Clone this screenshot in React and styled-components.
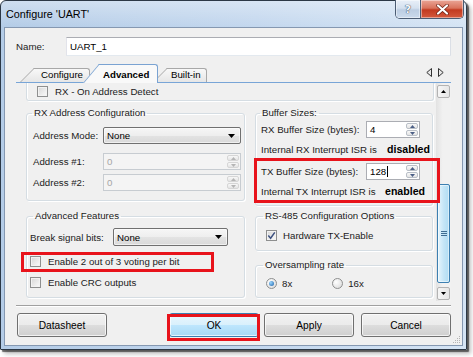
import React from "react";
import styled, { createGlobalStyle } from "styled-components";

const GlobalStyle = createGlobalStyle`
  html, body {
    margin: 0;
    padding: 0;
    background: #ffffff;
  }
  body {
    font-family: "Liberation Sans", Arial, sans-serif;
    font-size: 9.7px;
    color: #1b1b1b;
  }
  *, *::before, *::after {
    box-sizing: border-box;
  }
`;

const Page = styled.div`
  width: 473px;
  height: 357px;
  overflow: hidden;
  background: #ffffff;
`;

const Window = styled.div`
  width: 467px;
  height: 350px;
  display: flex;
  flex-direction: column;
  padding: 0 3px 3px;
  border: 1px solid #2c3846;
  border-radius: 6px 6px 1px 1px;
  background:
    linear-gradient(180deg, rgba(255, 255, 255, 0.35), rgba(255, 255, 255, 0) 26px),
    linear-gradient(90deg, #b4cce7 0%, #c3d7ee 55%, #d5e4f4 100%);
  box-shadow: 2px 2px 1px rgba(0, 0, 0, 0.55), 4px 4px 4px rgba(0, 0, 0, 0.25);
`;

const TitleBar = styled.div`
  height: 26px;
  flex-shrink: 0;
  display: flex;
  align-items: flex-start;
`;

const Title = styled.div`
  padding: 7px 0 0 2px;
  font-size: 10.8px;
  color: #000;
`;

const Caption = styled.div`
  margin: -1px -1px 0 auto;
  height: 19px;
  display: flex;
  border: 1px solid #4b5c73;
  border-top: none;
  border-radius: 0 0 5px 5px;
  overflow: hidden;
`;

const CaptionButton = styled.div`
  width: ${(p) => p.$w}px;
  display: flex;
  align-items: center;
  justify-content: center;
  background: ${(p) =>
    p.$close
      ? "linear-gradient(#eaa697 0%, #d9735c 45%, #c23a20 55%, #d4593d 100%)"
      : "linear-gradient(#e8eff8 0%, #d5e1ef 45%, #bccde2 55%, #cbdaec 100%)"};
  box-shadow: inset 0 0 0 1px rgba(255, 255, 255, 0.45);
  & + & {
    border-left: 1px solid #4b5c73;
  }
`;

const HelpGlyph = styled.span`
  font-family: "DejaVu Sans", sans-serif;
  font-size: 11px;
  font-weight: 700;
  color: #f6f9fc;
  text-shadow: 0 0 1px #30405a, 0 0 1px #30405a;
`;

const Client = styled.div`
  flex: 1;
  position: relative;
  display: flex;
  flex-direction: column;
  padding: 9px 11px 0;
  background: #f0f0f0;
  border: 1px solid #8598b1;
  white-space: nowrap;
`;

const NameRow = styled.div`
  display: flex;
  align-items: center;
  height: 19px;
`;

const NameLabel = styled.div`
  width: 50px;
`;

const TextBox = styled.div`
  flex: 1;
  height: 19px;
  display: flex;
  align-items: center;
  padding-left: 3px;
  background: #ffffff;
  border: 1px solid;
  border-color: #abadb3 #dbdfe6 #e3e9ef #e2e3ea;
  color: #000;
`;

const TabStrip = styled.div`
  margin-top: 8px;
  height: 19px;
  flex-shrink: 0;
  display: flex;
  align-items: flex-end;
  padding-left: 4px;
  border-bottom: 1px solid #78a5d7;
`;

const Tab = styled.div`
  position: relative;
  z-index: ${(p) => (p.$active ? 3 : 1)};
  width: ${(p) => p.$w}px;
  height: ${(p) => (p.$active ? 19 : 14)}px;
  margin-left: ${(p) => p.$ml}px;
  margin-bottom: ${(p) => (p.$active ? -1 : 0)}px;
  padding: ${(p) => (p.$active ? "1px" : "0")} 0 ${(p) => (p.$active ? "0" : "1px")} ${(p) => p.$pl}px;
  display: flex;
  align-items: center;
  font-weight: ${(p) => (p.$active ? 700 : 400)};
  color: #000;
  &::before,
  &::after {
    content: "";
    position: absolute;
    z-index: -1;
    top: 0;
    bottom: 0;
    border: 1px solid ${(p) => (p.$active ? "#7aa3d2" : "#a8a8a8")};
    border-bottom: none;
    background: ${(p) => (p.$active ? "#f9f9f9" : "linear-gradient(#f8f8f8, #e6e6e6)")};
  }
  &::before {
    left: 0;
    width: ${(p) => p.$slant + 4}px;
    border-right: none;
    transform-origin: bottom left;
    transform: skewX(-${(p) => p.$angle}deg);
  }
  &::after {
    left: ${(p) => p.$slant}px;
    right: 0;
    border-left: none;
    border-radius: 0 3px 0 0;
  }
`;

const TabArrows = styled.div`
  margin-left: auto;
  align-self: center;
  display: flex;
  gap: 6px;
  padding: 0 7px 2px 0;
`;

const Body = styled.div`
  height: 218px;
  flex-shrink: 0;
  display: flex;
`;

const Viewport = styled.div`
  flex: 1;
  display: flex;
  flex-direction: column;
  padding: 0 2px 0 10px;
`;

const PartialGroup = styled.div`
  height: 18px;
  padding: 3px 10px 0;
  border: 1px solid #d5dde3;
  border-top: none;
  border-radius: 0 0 3px 3px;
  box-shadow: inset 1px 0 0 #fff, 1px 1px 0 #fff;
`;

const Columns = styled.div`
  margin-top: 6px;
  display: grid;
  grid-template-columns: 219px 178px;
  column-gap: 10px;
  align-items: start;
`;

const Column = styled.div`
  display: flex;
  flex-direction: column;
`;

const Field = styled.fieldset`
  margin: ${(p) => p.$mt || 0}px 0 0;
  padding: ${(p) => p.$pad};
  min-inline-size: 0;
  border: 1px solid #d5dde3;
  border-radius: 3px;
  box-shadow: inset 1px 1px 0 #fff, 1px 1px 0 #fff;
`;

const Legend = styled.legend`
  margin-left: ${(p) => p.$ml}px;
  padding: 0 2px;
  line-height: 12px;
  color: #1b1b1b;
`;

const FormRow = styled.div`
  display: grid;
  grid-template-columns: ${(p) => p.$cols};
  align-items: center;
  height: ${(p) => p.$h || 17}px;
  margin-top: ${(p) => p.$mt || 0}px;
`;

const Value = styled.span`
  padding-left: ${(p) => p.$pl}px;
  font-size: 10.6px;
  font-weight: 700;
  color: #000;
`;

const Select = styled.div`
  height: ${(p) => p.$h || 17}px;
  display: flex;
  align-items: center;
  justify-content: space-between;
  padding: 0 5px 0 3px;
  border: 1px solid #707070;
  border-radius: 2px;
  background: linear-gradient(#f6f6f6 0%, #eeeeee 50%, #e3e3e3 51%, #d9d9d9 100%);
  box-shadow: inset 0 0 0 1px rgba(255, 255, 255, 0.6);
  color: #000;
`;

const Spin = styled.div`
  height: ${(p) => p.$h || 17}px;
  display: flex;
  border: 1px solid ${(p) => (p.$disabled ? "#c7ccd1" : "#abadb3")};
  background: ${(p) => (p.$disabled ? "#f4f4f4" : "#ffffff")};
  color: ${(p) => (p.$disabled ? "#a6a6a6" : "#000")};
`;

const SpinValue = styled.div`
  flex: 1;
  display: flex;
  align-items: center;
  padding-left: 3px;
`;

const TextCaret = styled.span`
  width: 1px;
  height: 11px;
  margin-left: 1px;
  background: #000;
`;

const SpinButtons = styled.div`
  width: 14px;
  display: flex;
  flex-direction: column;
  gap: 1px;
  padding: 1px;
`;

const SpinButton = styled.div`
  flex: 1;
  display: flex;
  align-items: center;
  justify-content: center;
  border: 1px solid ${(p) => (p.$disabled ? "#d6d6d6" : "#b9bfc7")};
  border-radius: 2px;
  background: linear-gradient(#f8f8f8, #e4e4e4);
`;

const CheckRow = styled.div`
  display: flex;
  align-items: center;
  gap: ${(p) => p.$gap || 7}px;
  height: ${(p) => p.$h || 11}px;
  margin-top: ${(p) => p.$mt || 0}px;
  color: #1b1b1b;
`;

const Check = styled.span`
  width: 11px;
  height: 11px;
  flex-shrink: 0;
  display: flex;
  align-items: center;
  justify-content: center;
  border: 1px solid #8e8f8f;
  background: linear-gradient(135deg, #d6d6d6, #fbfbfb);
  box-shadow: inset 0 0 0 1px #f2f2f2;
`;

const RadioGroup = styled.div`
  display: flex;
  align-items: center;
  height: 13px;
  margin-left: ${(p) => p.$ml || 0}px;
  gap: 5px;
`;

const Radio = styled.span`
  width: 11px;
  height: 11px;
  flex-shrink: 0;
  display: flex;
  align-items: center;
  justify-content: center;
  border: 1px solid #8e8f8f;
  border-radius: 50%;
  background: radial-gradient(circle at 35% 35%, #ffffff, #d6d6d6);
  &::after {
    content: "";
    display: ${(p) => (p.$on ? "block" : "none")};
    width: 5px;
    height: 5px;
    border-radius: 50%;
    background: radial-gradient(circle at 35% 35%, #9ad6ff, #1a5fa6);
  }
`;

const Marked = styled.div`
  position: relative;
  margin-top: ${(p) => p.$mt || 0}px;
  margin-left: ${(p) => (p.$push ? "auto" : "0")};
  &::after {
    content: "";
    position: absolute;
    z-index: 5;
    inset: ${(p) => p.$inset};
    border: 3px solid #e8131b;
    pointer-events: none;
  }
`;

const ScrollBar = styled.div`
  width: 15px;
  display: flex;
  flex-direction: column;
  padding: 2px 1px 1px;
  background: linear-gradient(90deg, #e2e2e2, #f1f1f1 45%, #f1f1f1);
`;

const ScrollButton = styled.div`
  height: 13px;
  flex-shrink: 0;
  display: flex;
  align-items: center;
  justify-content: center;
  border: 1px solid #b3b3b3;
  border-radius: 2px;
  background: linear-gradient(90deg, #f6f6f6, #e6e6e6);
`;

const Track = styled.div`
  flex: 1;
  display: flex;
  flex-direction: column;
`;

const Thumb = styled.div`
  margin-top: ${(p) => p.$top}px;
  height: ${(p) => p.$h}px;
  display: flex;
  align-items: center;
  justify-content: center;
  border: 1px solid #3c7fb1;
  border-radius: 2px;
  background: linear-gradient(90deg, #e5f5fd, #c6e6f7 50%, #afdcf3);
  box-shadow: inset 0 0 0 1px rgba(255, 255, 255, 0.5);
  &::after {
    content: "";
    width: 6px;
    height: 5px;
    background: repeating-linear-gradient(#3f6d92 0 1px, transparent 1px 2px);
  }
`;

const Separator = styled.div`
  margin-top: 4px;
  height: 2px;
  flex-shrink: 0;
  border-top: 1px solid #a0a0a0;
  border-bottom: 1px solid #ffffff;
`;

const ButtonRow = styled.div`
  margin-top: 6px;
  display: flex;
  align-items: flex-start;
  padding-left: 1px;
`;

const Button = styled.button`
  width: 90px;
  height: 24px;
  margin: 0 0 0 ${(p) => p.$ml || 0}px;
  padding: 0;
  font: inherit;
  font-size: 10.2px;
  color: #000;
  border: 1px solid ${(p) => (p.$default ? "#3c7fb1" : "#707070")};
  border-radius: 3px;
  background: ${(p) =>
    p.$default
      ? "linear-gradient(#eaf6fd 0%, #d9f0fc 50%, #bee6fd 51%, #a7d9f5 100%)"
      : "linear-gradient(#f2f2f2 0%, #ebebeb 50%, #dddddd 51%, #cfcfcf 100%)"};
  box-shadow: inset 0 0 0 1px rgba(255, 255, 255, 0.7);
`;

const Grip = styled.svg`
  position: absolute;
  right: 1px;
  bottom: 1px;
`;

const Tri = ({ dir = "down", color = "#000", w = 7, h = 4 }) => {
  const d =
    dir === "down" ? `M0 0H${w}L${w / 2} ${h}Z` : `M0 ${h}H${w}L${w / 2} 0Z`;
  return (
    <svg width={w} height={h} viewBox={`0 0 ${w} ${h}`}>
      <path d={d} fill={color} />
    </svg>
  );
};

const CloseIcon = () => (
  <svg width="13" height="11" viewBox="0 0 13 11">
    <path d="M2 1.5L11 9.5M11 1.5L2 9.5" stroke="#6e2315" strokeWidth="3.6" strokeLinecap="round" />
    <path d="M2 1.5L11 9.5M11 1.5L2 9.5" stroke="#ffffff" strokeWidth="2.2" strokeLinecap="round" />
  </svg>
);

const CheckMark = () => (
  <svg width="9" height="9" viewBox="0 0 9 9">
    <path d="M1.3 4.6L3.6 7.2L7.8 1.4" stroke="#3d5180" strokeWidth="1.5" fill="none" />
  </svg>
);

const TabArrow = ({ left }) => (
  <svg width="6" height="9" viewBox="0 0 6 9">
    <path
      d={left ? "M5.5 0.5V8.5L0.8 4.5Z" : "M0.5 0.5V8.5L5.2 4.5Z"}
      fill="#e8e8e8"
      stroke="#333"
      strokeWidth="1"
    />
  </svg>
);

const SpinBox = ({ value, disabled, caret }) => (
  <Spin $disabled={disabled}>
    <SpinValue>
      {value}
      {caret && <TextCaret />}
    </SpinValue>
    <SpinButtons>
      <SpinButton $disabled={disabled}>
        <Tri dir="up" w={5} h={3} color={disabled ? "#b5b5b5" : "#4b5f86"} />
      </SpinButton>
      <SpinButton $disabled={disabled}>
        <Tri dir="down" w={5} h={3} color={disabled ? "#b5b5b5" : "#4b5f86"} />
      </SpinButton>
    </SpinButtons>
  </Spin>
);

export default function App() {
  return (
    <>
      <GlobalStyle />
      <Page>
        <Window>
          <TitleBar>
            <Title>Configure 'UART'</Title>
            <Caption>
              <CaptionButton $w={24}>
                <HelpGlyph>?</HelpGlyph>
              </CaptionButton>
              <CaptionButton $w={43} $close>
                <CloseIcon />
              </CaptionButton>
            </Caption>
          </TitleBar>

          <Client>
            <NameRow>
              <NameLabel>Name:</NameLabel>
              <TextBox>UART_1</TextBox>
            </NameRow>

            <TabStrip>
              <Tab $w={70} $ml={0} $pl={21} $slant={14} $angle={45}>
                Configure
              </Tab>
              <Tab $active $w={75} $ml={-7} $pl={20} $slant={16} $angle={40}>
                Advanced
              </Tab>
              <Tab $w={54} $ml={-5} $pl={18} $slant={14} $angle={45}>
                Built-in
              </Tab>
              <TabArrows>
                <TabArrow left />
                <TabArrow />
              </TabArrows>
            </TabStrip>

            <Body>
              <Viewport>
                <PartialGroup>
                  <CheckRow>
                    <Check />
                    RX - On Address Detect
                  </CheckRow>
                </PartialGroup>

                <Columns>
                  <Column>
                    <Field $pad="8px 3px 9px 6px">
                      <Legend $ml={-1}>RX Address Configuration</Legend>
                      <FormRow $cols="70px 138px">
                        <span>Address Mode:</span>
                        <Select>
                          None
                          <Tri />
                        </Select>
                      </FormRow>
                      <FormRow $cols="70px 138px" $mt={9}>
                        <span>Address #1:</span>
                        <SpinBox value="0" disabled />
                      </FormRow>
                      <FormRow $cols="70px 138px" $mt={4}>
                        <span>Address #2:</span>
                        <SpinBox value="0" disabled />
                      </FormRow>
                    </Field>

                    <Field $mt={9} $pad="6px 3px 8px 3px">
                      <Legend $ml={3}>Advanced Features</Legend>
                      <FormRow $cols="83px 115px" $h={18}>
                        <span>Break signal bits:</span>
                        <Select $h={18}>
                          None
                          <Tri />
                        </Select>
                      </FormRow>
                      <Marked $mt={9} $inset="-3px 27px -4px -9px">
                        <CheckRow $h={13} $gap={7}>
                          <Check />
                          Enable 2 out of 3 voting per bit
                        </CheckRow>
                      </Marked>
                      <CheckRow $h={13} $gap={7} $mt={8}>
                        <Check />
                        Enable CRC outputs
                      </CheckRow>
                    </Field>
                  </Column>

                  <Column>
                    <Field $pad="2px 5px 8px 5px">
                      <Legend $ml={-1}>Buffer Sizes:</Legend>
                      <FormRow $cols="105px 54px">
                        <span>RX Buffer Size (bytes):</span>
                        <SpinBox value="4" />
                      </FormRow>
                      <FormRow $cols="124px 1fr" $h={12} $mt={5}>
                        <span>Internal RX Interrupt ISR is</span>
                        <Value $pl={2}>disabled</Value>
                      </FormRow>
                      <Marked $mt={8} $inset="-5px -13px -6px -7px">
                        <FormRow $cols="105px 54px">
                          <span>TX Buffer Size (bytes):</span>
                          <SpinBox value="128" caret />
                        </FormRow>
                        <FormRow $cols="124px 1fr" $h={12} $mt={5}>
                          <span>Internal TX Interrupt ISR is</span>
                          <Value $pl={0}>enabled</Value>
                        </FormRow>
                      </Marked>
                    </Field>

                    <Field $mt={4} $pad="7px 5px 8px 10px">
                      <Legend $ml={-3}>RS-485 Configuration Options</Legend>
                      <CheckRow $h={13} $gap={6}>
                        <Check>
                          <CheckMark />
                        </Check>
                        Hardware TX-Enable
                      </CheckRow>
                    </Field>

                    <Field $mt={8} $pad="6px 5px 7px 10px">
                      <Legend $ml={-3}>Oversampling rate</Legend>
                      <CheckRow $h={13} $gap={0}>
                        <RadioGroup>
                          <Radio $on />
                          8x
                        </RadioGroup>
                        <RadioGroup $ml={33}>
                          <Radio />
                          16x
                        </RadioGroup>
                      </CheckRow>
                    </Field>
                  </Column>
                </Columns>
              </Viewport>

              <ScrollBar>
                <ScrollButton>
                  <Tri dir="up" w={5} h={3} />
                </ScrollButton>
                <Track>
                  <Thumb $top={86} $h={99} />
                </Track>
                <ScrollButton>
                  <Tri dir="down" w={5} h={3} />
                </ScrollButton>
              </ScrollBar>
            </Body>

            <Separator />

            <ButtonRow>
              <Button>Datasheet</Button>
              <Marked $push $inset="1px -1px -4px -2px">
                <Button $default>OK</Button>
              </Marked>
              <Button $ml={5}>Apply</Button>
              <Button $ml={7}>Cancel</Button>
            </ButtonRow>

            <Grip width="8" height="8" viewBox="0 0 8 8">
              <g fill="#b4b4b4">
                <rect x="6" y="0" width="1" height="1" />
                <rect x="4" y="2" width="1" height="1" />
                <rect x="6" y="2" width="1" height="1" />
                <rect x="2" y="4" width="1" height="1" />
                <rect x="4" y="4" width="1" height="1" />
                <rect x="6" y="4" width="1" height="1" />
                <rect x="0" y="6" width="1" height="1" />
                <rect x="2" y="6" width="1" height="1" />
                <rect x="4" y="6" width="1" height="1" />
                <rect x="6" y="6" width="1" height="1" />
              </g>
            </Grip>
          </Client>
        </Window>
      </Page>
    </>
  );
}
